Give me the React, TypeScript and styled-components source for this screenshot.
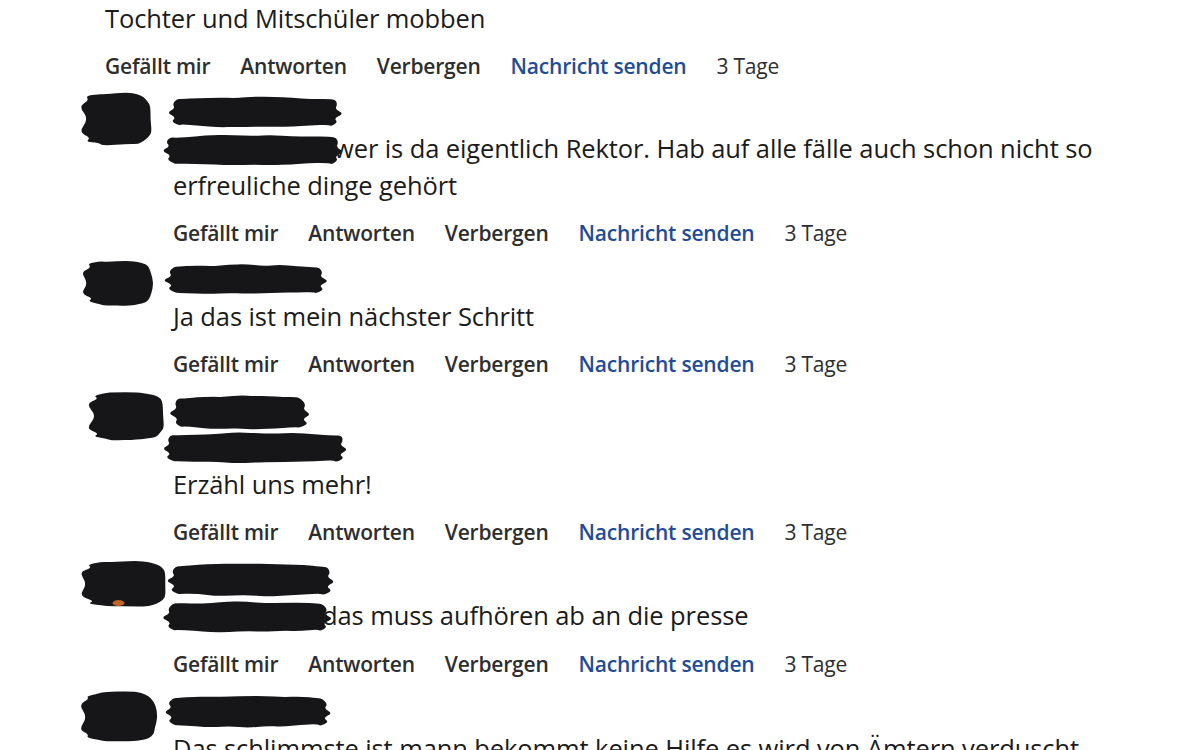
import React from "react";
import styled, { createGlobalStyle } from "styled-components";

const Global = createGlobalStyle`
  html, body { margin: 0; padding: 0; background: #ffffff; }
  body { font-family: "Open Sans", "Noto Sans", sans-serif; color: #1b1b1b; overflow: hidden; }
`;

const Page = styled.div`
  width: 1200px;
  height: 750px;
  overflow: hidden;
  padding: 0 70px 0 78px;
  box-sizing: border-box;
`;

const TopPost = styled.div`
  padding-left: 27px;
  margin-bottom: 14px;
`;

const BodyText = styled.p`
  margin: 0;
  font-size: 25.5px;
  line-height: 36px;
  letter-spacing: -0.1px;
  color: #1b1b1b;
`;

const Actions = styled.div`
  display: flex;
  gap: 30px;
  margin-top: 15px;
  height: 30px;
  align-items: center;
  font-size: 21px;
  line-height: 30px;
  letter-spacing: -0.2px;
`;

const Action = styled.span<{ $blue?: boolean; $plain?: boolean }>`
  font-weight: ${(p) => (p.$plain ? 400 : 600)};
  color: ${(p) => (p.$blue ? "#1f4c98" : "#2e2e2e")};
`;

const Comment = styled.div`
  display: flex;
  margin-bottom: 15px;
`;

const AvatarCell = styled.div<{ $shift: number; $left: number }>`
  width: 95px;
  flex: none;
  margin-top: ${(p) => p.$shift}px;
  padding-left: ${(p) => p.$left}px;
  box-sizing: border-box;
`;

const Content = styled.div`
  flex: 1;
  min-width: 0;
`;

const NameLine = styled.div<{ $h: number; $left: number }>`
  height: ${(p) => p.$h}px;
  margin-left: ${(p) => p.$left}px;
`;

const BlockSvg = styled.svg`
  display: block;
  overflow: visible;
`;

const InlineSvg = styled.svg`
  display: inline-block;
  vertical-align: -9px;
  margin-left: -13px;
  margin-right: -12px;
  overflow: visible;
`;

function rng(seed: number) {
  let s = seed * 7919 + 104729;
  return () => {
    s = (s * 9301 + 49297) % 233280;
    return s / 233280;
  };
}

function smooth(pts: [number, number][]) {
  const n = pts.length;
  const mid = (a: [number, number], b: [number, number]) => [(a[0] + b[0]) / 2, (a[1] + b[1]) / 2];
  const m0 = mid(pts[n - 1], pts[0]);
  let d = `M${m0[0].toFixed(1)},${m0[1].toFixed(1)}`;
  for (let i = 0; i < n; i++) {
    const p = pts[i];
    const m = mid(p, pts[(i + 1) % n]);
    d += ` Q${p[0].toFixed(1)},${p[1].toFixed(1)} ${m[0].toFixed(1)},${m[1].toFixed(1)}`;
  }
  return d + " Z";
}

/* a horizontal brush stroke with ragged, tapering ends */
function strokePath(w: number, h: number, seed: number) {
  const r = rng(seed);
  const pts: [number, number][] = [];
  const e = 16;
  const n = 8;
  for (let i = 0; i <= n; i++) {
    const t = i / n;
    const bulge = Math.sin(t * Math.PI) * 2;
    pts.push([e + (w - 2 * e) * t, 3 - bulge + r() * 2]);
  }
  // right end: streaky, tapering to a point near the middle
  const right: [number, number][] = [
    [w - e + 4 + r() * 4, h * 0.14],
    [w - 5 - r() * 3, h * 0.3],
    [w - e + 6, h * 0.42],
    [w - r() * 2, h * 0.55],
    [w - e + 5, h * 0.68],
    [w - 4 - r() * 4, h * 0.8],
    [w - e + 2, h * 0.92],
  ];
  pts.push(...right);
  for (let i = n; i >= 0; i--) {
    const t = i / n;
    const bulge = Math.sin(t * Math.PI) * 2;
    pts.push([e + (w - 2 * e) * t, h - 3 + bulge - r() * 2]);
  }
  const left: [number, number][] = [
    [e - 2, h * 0.9],
    [4 + r() * 4, h * 0.78],
    [e - 5, h * 0.66],
    [r() * 2, h * 0.52],
    [e - 6, h * 0.4],
    [5 + r() * 3, h * 0.26],
    [e - 3 - r() * 3, h * 0.12],
  ];
  pts.push(...left);
  return smooth(pts);
}

/* an irregular round-ish blot */
function blotPath(w: number, h: number, seed: number) {
  const r = rng(seed);
  const cx = w / 2;
  const cy = h / 2;
  const pts: [number, number][] = [];
  const n = 22;
  for (let i = 0; i < n; i++) {
    const a = (i / n) * Math.PI * 2;
    const ca = Math.cos(a);
    const sa = Math.sin(a);
    const k = 0.55;
    const rx = cx * Math.pow(Math.abs(ca), k) * Math.sign(ca);
    const ry = cy * Math.pow(Math.abs(sa), k) * Math.sign(sa);
    const left = ca < -0.3;
    const jag = left ? (i % 2 === 0 ? 1 : 0.8 - r() * 0.12) : 0.93 + r() * 0.07;
    pts.push([cx + rx * jag, cy + ry * (0.92 + r() * 0.08)]);
  }
  return smooth(pts);
}

const Stroke: React.FC<{ w: number; h: number; seed: number }> = ({ w, h, seed }) => (
  <BlockSvg width={w} height={h} viewBox={`0 0 ${w} ${h}`}>
    <path d={strokePath(w, h, seed)} fill="#161618" />
  </BlockSvg>
);

const InlineStroke: React.FC<{ w: number; h: number; seed: number }> = ({ w, h, seed }) => (
  <InlineSvg width={w} height={h} viewBox={`0 0 ${w} ${h}`}>
    <path d={strokePath(w, h, seed)} fill="#161618" />
  </InlineSvg>
);

const Blot: React.FC<{ w: number; h: number; seed: number; mark?: boolean }> = ({ w, h, seed, mark }) => (
  <BlockSvg width={w} height={h} viewBox={`0 0 ${w} ${h}`}>
    <path d={blotPath(w, h, seed)} fill="#161618" />
    {mark && <ellipse cx={w * 0.45} cy={h - 5} rx={6} ry={3} fill="#c0642a" />}
  </BlockSvg>
);

const ActionRow: React.FC = () => (
  <Actions>
    <Action>Gefällt mir</Action>
    <Action>Antworten</Action>
    <Action>Verbergen</Action>
    <Action $blue>Nachricht senden</Action>
    <Action $plain>3 Tage</Action>
  </Actions>
);

export default function App() {
  return (
    <>
      <Global />
      <Page>
        <TopPost>
          <BodyText>Tochter und Mitschüler mobben</BodyText>
          <ActionRow />
        </TopPost>

        <Comment>
          <AvatarCell $shift={-3} $left={0}>
            <Blot w={75} h={54} seed={3} />
          </AvatarCell>
          <Content>
            <NameLine $h={35} $left={-8}>
              <Stroke w={180} h={34} seed={5} />
            </NameLine>
            <BodyText>
              <InlineStroke w={186} h={34} seed={7} />
              wer is da eigentlich Rektor. Hab auf alle fälle auch schon nicht so erfreuliche dinge gehört
            </BodyText>
            <ActionRow />
          </Content>
        </Comment>

        <Comment>
          <AvatarCell $shift={-3} $left={2}>
            <Blot w={74} h={46} seed={11} />
          </AvatarCell>
          <Content>
            <NameLine $h={35} $left={-11}>
              <Stroke w={168} h={33} seed={13} />
            </NameLine>
            <BodyText>Ja das ist mein nächster Schritt</BodyText>
            <ActionRow />
          </Content>
        </Comment>

        <Comment>
          <AvatarCell $shift={-3} $left={7}>
            <Blot w={80} h={50} seed={17} />
          </AvatarCell>
          <Content>
            <NameLine $h={37} $left={-6}>
              <Stroke w={146} h={37} seed={19} />
            </NameLine>
            <NameLine $h={35} $left={-13}>
              <Stroke w={190} h={34} seed={23} />
            </NameLine>
            <BodyText>Erzähl uns mehr!</BodyText>
            <ActionRow />
          </Content>
        </Comment>

        <Comment>
          <AvatarCell $shift={-2} $left={-5}>
            <Blot w={90} h={48} seed={29} mark />
          </AvatarCell>
          <Content>
            <NameLine $h={35} $left={-8}>
              <Stroke w={172} h={36} seed={31} />
            </NameLine>
            <BodyText>
              <InlineStroke w={174} h={34} seed={37} />
              das muss aufhören ab an die presse
            </BodyText>
            <ActionRow />
          </Content>
        </Comment>

        <Comment>
          <AvatarCell $shift={-3} $left={0}>
            <Blot w={80} h={52} seed={41} />
          </AvatarCell>
          <Content>
            <NameLine $h={36} $left={-11}>
              <Stroke w={172} h={35} seed={43} />
            </NameLine>
            <BodyText>Das schlimmste ist mann bekommt keine Hilfe es wird von Ämtern verduscht</BodyText>
          </Content>
        </Comment>
      </Page>
    </>
  );
}
